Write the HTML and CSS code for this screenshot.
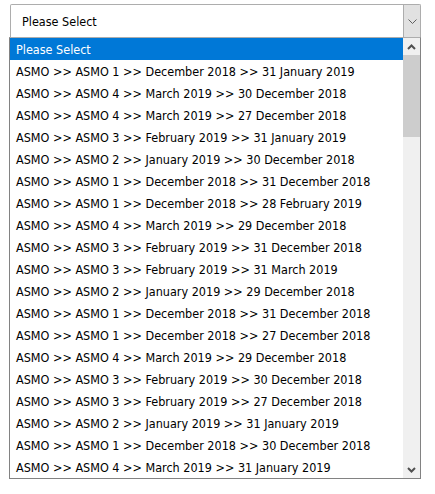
FILE: index.html
```html
<!DOCTYPE html>
<html lang="en">
<head>
    <meta charset="UTF-8">
    <title>Period select</title>
    <link rel="stylesheet" href="styles.css">
</head>
<body>
    <div class="picker">
        <div class="picker-box">
            <span class="picker-value">Please Select</span>
            <span class="picker-arrow">
                <svg width="9" height="5" viewBox="0 0 9 5"><path d="M0.5 0.5 L4.5 4.5 L8.5 0.5" fill="none" stroke="#606060" stroke-width="1"/></svg>
            </span>
        </div>

        <div class="picker-list">
            <ul class="options">
                <li class="selected">Please Select</li>
                <li>ASMO &gt;&gt; ASMO 1 &gt;&gt; December 2018 &gt;&gt; 31 January 2019</li>
                <li>ASMO &gt;&gt; ASMO 4 &gt;&gt; March 2019 &gt;&gt; 30 December 2018</li>
                <li>ASMO &gt;&gt; ASMO 4 &gt;&gt; March 2019 &gt;&gt; 27 December 2018</li>
                <li>ASMO &gt;&gt; ASMO 3 &gt;&gt; February 2019 &gt;&gt; 31 January 2019</li>
                <li>ASMO &gt;&gt; ASMO 2 &gt;&gt; January 2019 &gt;&gt; 30 December 2018</li>
                <li>ASMO &gt;&gt; ASMO 1 &gt;&gt; December 2018 &gt;&gt; 31 December 2018</li>
                <li>ASMO &gt;&gt; ASMO 1 &gt;&gt; December 2018 &gt;&gt; 28 February 2019</li>
                <li>ASMO &gt;&gt; ASMO 4 &gt;&gt; March 2019 &gt;&gt; 29 December 2018</li>
                <li>ASMO &gt;&gt; ASMO 3 &gt;&gt; February 2019 &gt;&gt; 31 December 2018</li>
                <li>ASMO &gt;&gt; ASMO 3 &gt;&gt; February 2019 &gt;&gt; 31 March 2019</li>
                <li>ASMO &gt;&gt; ASMO 2 &gt;&gt; January 2019 &gt;&gt; 29 December 2018</li>
                <li>ASMO &gt;&gt; ASMO 1 &gt;&gt; December 2018 &gt;&gt; 31 December 2018</li>
                <li>ASMO &gt;&gt; ASMO 1 &gt;&gt; December 2018 &gt;&gt; 27 December 2018</li>
                <li>ASMO &gt;&gt; ASMO 4 &gt;&gt; March 2019 &gt;&gt; 29 December 2018</li>
                <li>ASMO &gt;&gt; ASMO 3 &gt;&gt; February 2019 &gt;&gt; 30 December 2018</li>
                <li>ASMO &gt;&gt; ASMO 3 &gt;&gt; February 2019 &gt;&gt; 27 December 2018</li>
                <li>ASMO &gt;&gt; ASMO 2 &gt;&gt; January 2019 &gt;&gt; 31 January 2019</li>
                <li>ASMO &gt;&gt; ASMO 1 &gt;&gt; December 2018 &gt;&gt; 30 December 2018</li>
                <li>ASMO &gt;&gt; ASMO 4 &gt;&gt; March 2019 &gt;&gt; 31 January 2019</li>
            </ul>

            <!-- scrollbar -->
            <div class="scrollbar">
                <span class="scroll-btn">
                    <svg width="9" height="6" viewBox="0 0 9 6"><path d="M1 5 L4.5 1.5 L8 5" fill="none" stroke="#505050" stroke-width="2"/></svg>
                </span>
                <div class="scroll-track">
                    <div class="scroll-thumb"></div>
                </div>
                <span class="scroll-btn">
                    <svg width="9" height="6" viewBox="0 0 9 6"><path d="M1 1 L4.5 4.5 L8 1" fill="none" stroke="#505050" stroke-width="2"/></svg>
                </span>
            </div>
        </div>
    </div>
</body>
</html>
```

FILE: styles.css
```css
/* common */
body {
    margin: 0;
    padding: 4px 14px 0 9px;
    font-family: "DejaVu Sans Condensed", Tahoma, sans-serif;
    font-size: 12.5px;
    color: #000;
    background: #fff;
}

.picker {
    width: 412px;
}

/* closed box */
.picker-box {
    display: flex;
    height: 32px;
    margin-left: 1px;
    border: 1px solid #adadad;
    border-bottom: none;
    border-radius: 2px 2px 0 0;
    background: #fff;
}
.picker-value {
    flex: 1;
    padding-left: 11px;
    line-height: 33px;
}
.picker-arrow {
    width: 16px;
    display: flex;
    align-items: center;
    justify-content: center;
    background: #e1e1e1;
    border-left: 1px solid #adadad;
}

/* open list */
.picker-list {
    display: flex;
    height: 440px;
    border: 1px solid #828282;
    border-top: 1px solid #adadad;
}
.options {
    flex: 1;
    list-style: none;
    margin: 0;
    padding: 0;
}
.options li {
    height: 22px;
    line-height: 23px;
    padding-left: 6px;
    white-space: nowrap;
    overflow: hidden;
}
.options li.selected {
    background: #0078d7;
    color: #fff;
}

.scrollbar {
    width: 17px;
    display: flex;
    flex-direction: column;
    background: #f0f0f0;
}
.scroll-btn {
    height: 17px;
    display: flex;
    align-items: center;
    justify-content: center;
}
.scroll-track {
    flex: 1;
}
.scroll-thumb {
    height: 82px;
    background: #cdcdcd;
}
```
